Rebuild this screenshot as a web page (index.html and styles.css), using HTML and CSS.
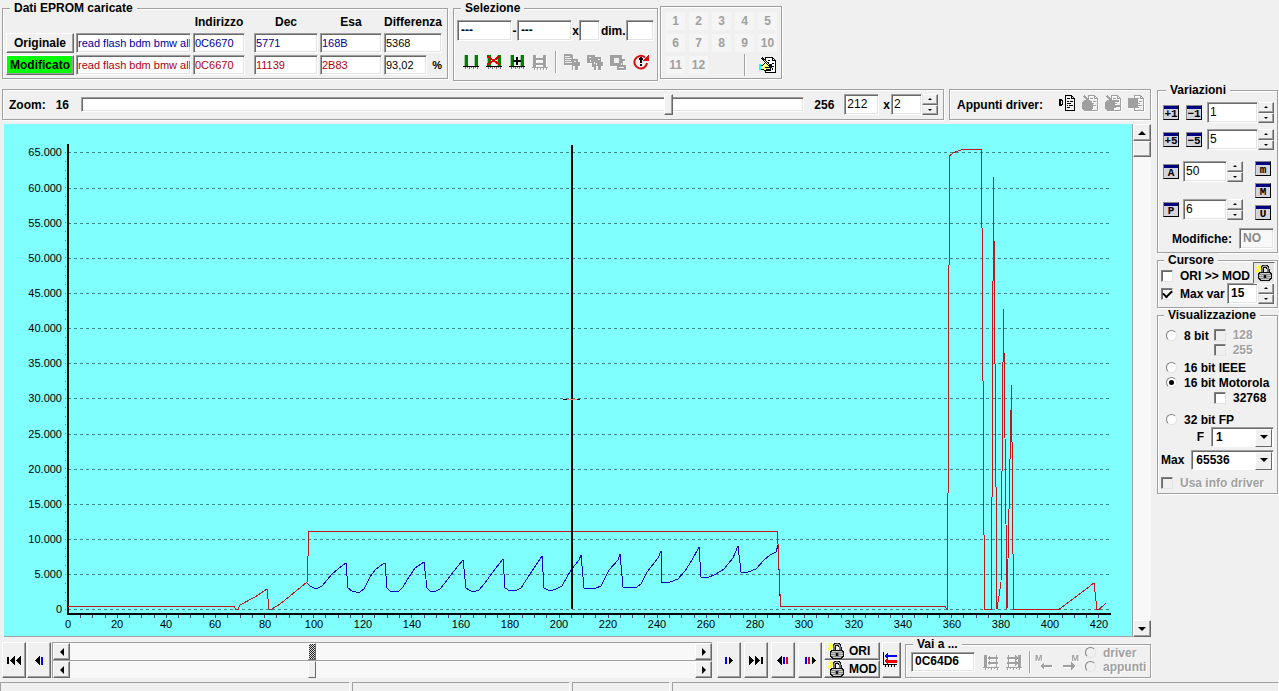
FILE: index.html
```html
<!DOCTYPE html>
<html lang="it">
<head>
<meta charset="utf-8">
<title>Dati EPROM</title>
<link rel="stylesheet" href="styles.css">
</head>
<body>
<svg class="defs" aria-hidden="true">
  <symbol id="i-bars" viewBox="0 0 16 16"><path fill="#008000" d="M1 1h4v11h-4zM11 1h4v11h-4z"/><path class="paper" d="M1 1h1v11h-1zM11 1h1v11h-1z"/><path d="M0 12h16v1H0z"/><path fill="#777" d="M2 13h1v2h-1zM4 13h1v1h-1zM6 13h1v2h-1zM8 13h1v1h-1zM10 13h1v2h-1zM12 13h1v1h-1zM14 13h1v2h-1z"/></symbol>
  <symbol id="i-ladder" viewBox="0 0 16 16"><path d="M1 1h3v13h-3zM11 1h3v13h-3zM4 4h7v2H4zM4 9h7v2H4zM0 13h16v1H0zM2 14h1v2h-1zM5 14h1v2h-1zM8 14h1v2h-1zM11 14h1v2h-1zM14 14h1v2h-1z"/></symbol>
  <symbol id="i-page" viewBox="0 0 16 16"><path d="M6 0h7v1H6zM6 0h1v16H6zM6 15h10v1H6zM15 3h1v13h-1zM12 0h1v4h-1zM12 3h4v1h-4zM13 1h1v1h-1zM14 2h1v1h-1zM8 3h3v1H8zM8 6h2v1H8zM11 6h3v1h-3zM8 8h4v1H8zM8 10h1v1H8zM10 10h4v1h-4zM8 12h3v1H8z"/></symbol>
  <symbol id="i-copy" viewBox="0 0 16 16"><path d="M0 0h7l2 2v3h5v3h2v4h-2v4h-3v-4H9v4H8v-5H0z"/><path class="hole" d="M1 2h5v1H1zM1 4h7v1H1zM1 6h6v1H1zM1 8h7v1H1zM10 7h2v1h-2z"/></symbol>
  <symbol id="i-copy2" viewBox="0 0 16 16"><path d="M0 1h8v2h6v5h2v4h-2v4h-3v-4h-2v4H7v-3H5v-4H0z"/><path class="hole" d="M2 3h2v1H2zM3 6h1v2H3zM11 5h2v1h-2zM7 8h1v2H7zM9 9h1v2H9z"/></symbol>
  <symbol id="i-copy3" viewBox="0 0 16 16"><path d="M0 1h12v4h3v2h-2v4h3v5H7v-4H0z"/><path class="hole" d="M4 4h5v5H4zM9 13h5v1H9zM11 9h1v2h-1z"/></symbol>
  <symbol id="i-lock" viewBox="0 0 18 18"><path fill="#ff4" d="M0 3h3L2 0l4 2v4l-2 1v2L2 8H0l2-3z"/><path fill="none" stroke="#111" stroke-width="3" d="M7 9V5q0-3 3-3t3 3v4"/><path class="smooth" fill="none" stroke="#ccc" stroke-width="1" d="M7 9V5q0-3 3-3t3 3v4"/><path fill="#111" d="M4 8h12v1h1v6h-1v1h-1v1H5v-1H4v-1H3V9h1z"/><path fill="#ccc" d="M5 9h10v1H5zM4 11h4v1H4zM12 11h4v1h-4zM4 13h4v1H4zM12 13h4v1h-4zM6 15h8v1H6z"/><path fill="#888" d="M4 10h12v1H4zM4 12h4v1H4zM12 12h4v1h-4zM5 14h10v1H5zM8 11h1v3H8zM11 11h1v3h-1z"/></symbol>
  <symbol id="i-hand" viewBox="0 0 18 18"><path fill="#fff" stroke="#000" d="M6.500 1.500h7l3 3v12h-10z"/><path d="M13 1h1v3h3v1h-4zM9 4h2v1H9zM13 7h2v1h-2zM11 10h4v1h-4zM13 12h1v2h-1zM9 14h3v1H9z"/><path fill="#ffff80" stroke="#000" d="M1.500 9.500h2l3-3h3v2h3v3h-1v3h-6l-1-1h-3z"/><path fill="#0ff" d="M0 8h2v6H0z"/><path fill="none" stroke="#000" stroke-width="2" d="M3 2l9 9"/><path fill="none" stroke="#ff8" d="M5 4l5 5"/><path d="M6 11h5v1H6zM7 13h4v1H7z"/></symbol>
  <symbol id="i-comb-left" viewBox="0 0 16 16"><path d="M1 1h3v12h-3zM13 1h1v12h-1zM4 4l3-3v2h8v2H7v2zM4 9l3-3v2h8v2H7v2zM0 13h16v1H0zM2 14h1v2h-1zM5 14h1v1h-1zM8 14h1v2h-1zM11 14h1v1h-1zM14 14h1v2h-1z"/></symbol>
  <symbol id="i-arrow" viewBox="0 0 12 8"><path d="M0 4l4-4v3h8v2H4v3z"/></symbol>
  <symbol id="t-left" viewBox="0 0 5 9"><path d="M5 0v9L0 4.500z"/></symbol>
  <symbol id="t-right" viewBox="0 0 5 9"><path d="M0 0v9l5-4.500z"/></symbol>
</svg>

<div class="app">
  <header class="top">
    <fieldset class="group eprom">
      <legend>Dati EPROM caricate</legend>
      <div class="eprom-grid">
        <span class="head addr">Indirizzo</span><span class="head">Dec</span><span class="head">Esa</span><span class="head">Differenza</span>
        <button class="btn file" type="button">Originale</button>
        <input class="field ori" aria-label="File originale" value="read flash bdm bmw all">
        <input class="field ori addr" aria-label="Indirizzo originale" value="0C6670">
        <input class="field ori" aria-label="Dec originale" value="5771">
        <input class="field ori" aria-label="Esa originale" value="168B">
        <input class="field" aria-label="Differenza" value="5368">
        <button class="btn file active" type="button">Modificato</button>
        <input class="field mod" aria-label="File modificato" value="read flash bdm bmw all">
        <input class="field mod addr" aria-label="Indirizzo modificato" value="0C6670">
        <input class="field mod" aria-label="Dec modificato" value="11139">
        <input class="field mod" aria-label="Esa modificato" value="2B83">
        <span class="percent"><input class="field" aria-label="Differenza percentuale" value="93,02"><b>%</b></span>
      </div>
    </fieldset>

    <fieldset class="group selection">
      <legend>Selezione</legend>
      <div class="sel-fields">
        <input class="field bold w54" aria-label="Inizio" value="---"><span>-</span><input class="field bold w54" aria-label="Fine" value="---"><span>x</span><input class="field w21" aria-label="Colonne"><label for="dim">dim.</label><input class="field w28" id="dim">
      </div>
      <div class="tools">
        <button class="tool" type="button" aria-label="Seleziona"><svg><use href="#i-bars"/></svg></button>
        <button class="tool" type="button" aria-label="Annulla selezione"><svg viewBox="0 0 16 16"><use href="#i-bars"/><path stroke="#d00" stroke-width="2" d="M1 2l13 9M14 2L1 11"/></svg></button>
        <button class="tool" type="button" aria-label="Aggiungi"><svg viewBox="0 0 16 16"><use href="#i-bars"/><path d="M4 6h8v2H4zM7 3h2v8H7z"/></svg></button>
        <button class="tool off" type="button" disabled aria-label="Unisci"><svg><use href="#i-ladder"/></svg></button>
        <i class="sep"></i>
        <button class="tool off" type="button" disabled aria-label="Copia"><svg><use href="#i-copy"/></svg></button>
        <button class="tool off" type="button" disabled aria-label="Copia blocco"><svg><use href="#i-copy2"/></svg></button>
        <button class="tool off" type="button" disabled aria-label="Incolla"><svg><use href="#i-copy3"/></svg></button>
        <button class="tool" type="button" aria-label="Ripristina"><svg viewBox="0 0 16 16"><path class="smooth" fill="none" stroke="#d81010" stroke-width="2" d="M12 3.500A6.300 6.300 0 1 0 14 9"/><path fill="#d81010" d="M16 0v7H9z"/><path d="M7 3h2v6H7zM6 4h4v2H6zM7 10h2v2H7z"/></svg></button>
      </div>
    </fieldset>

    <section class="group pages" aria-label="Pagine">
      <button type="button" disabled>1</button><button type="button" disabled>2</button><button type="button" disabled>3</button><button type="button" disabled>4</button><button type="button" disabled>5</button>
      <button type="button" disabled>6</button><button type="button" disabled>7</button><button type="button" disabled>8</button><button type="button" disabled>9</button><button type="button" disabled>10</button>
      <button type="button" disabled>11</button><button type="button" disabled>12</button><span></span><i class="sep"></i>
      <button class="tool note" type="button" aria-label="Annota"><svg><use href="#i-hand"/></svg></button>
    </section>
  </header>

  <main class="main">
    <div class="work">
      <div class="zoombar">
        <section class="group zoom">
          <label for="zoom">Zoom:</label><span class="min">16</span>
          <input class="slider" id="zoom" type="range" min="16" max="256" value="212">
          <span>256</span>
          <input class="field big w35" aria-label="Zoom attuale" value="212">
          <label for="mult">x</label>
          <span class="spin"><input class="field big w30" id="mult" value="2"><span class="ud"><button type="button" aria-label="Su"></button><button type="button" aria-label="Giù"></button></span></span>
        </section>
        <section class="group notes">
          <span class="notes-label">Appunti driver:</span>
          <button class="tool" type="button" aria-label="Documento"><svg viewBox="0 0 16 16"><use href="#i-page"/><path d="M0 4h3v1h1v5H3v1H0zM2 6v3h1V6z" fill-rule="evenodd"/></svg></button>
          <button class="tool off" type="button" disabled aria-label="Scrivi appunto"><svg viewBox="0 0 16 16"><use href="#i-page"/><path d="M0 7l3-2 4 1 4 4v3l-3 3H3l-3-2zM2 0l9 8-1 1L1 2z"/></svg></button>
          <button class="tool off" type="button" disabled aria-label="Modifica appunto"><svg viewBox="0 0 16 16"><use href="#i-page"/><path d="M0 7l3-2h11v2h-4v3h5v2h-5l-2 4H3l-3-2zM2 0l9 8-1 1L1 2z"/></svg></button>
          <button class="tool off" type="button" disabled aria-label="Chiudi appunto"><svg viewBox="0 0 16 16"><use href="#i-page"/><path d="M0 3h10v10H0z"/></svg></button>
        </section>
      </div>

      <div class="plot">
        <svg class="chart" viewBox="4 124 1129 513" role="img" aria-label="Grafico dei valori">
          <g class="lines">
            <path class="grid" d="M68 152.500H1110M68 188.500H1110M68 223.500H1110M68 258.500H1110M68 293.500H1110M68 328.500H1110M68 363.500H1110M68 398.500H1110M68 434.500H1110M68 469.500H1110M68 504.500H1110M68 539.500H1110M68 574.500H1110M68 609.500H1110"/>
            <path class="xticks" d="M80 616.500H1110"/><path class="yticks" d="M65.500 152V612"/>
            <path class="axis" d="M68 144V614H1111"/>
            <path class="blue" d="M307 583L310 586L314 588H318L322 586L327 580L332 574L338 569L346 563L348 588L352 591L356 592H360L364 589L370 577L375 570L384 563H385L387 588L390 591L394 592L399 591L403 587L409 577L415 568L424 562L427 588L430 591L434 592L440 589L448 579L454 571L463 560L466 588L469 590L473 592L479 590L485 583L492 573L503 559L505 588L510 591L517 590L521 588L532 571L542 556L544 588L550 591L556 589L562 586L567 577L571 570L579 560L581 555L584 588L591 589L596 588L601 586L609 570L618 560L620 554L623 587L629 588L637 587L641 584L647 572L658 558L661 551L662 582H670L678 579L685 571L692 560L699 547L701 577L707 578L716 574L724 569L733 558L738 546L741 572H748L756 569L764 560L770 555L776 552L778 545L779 570L780 596"/>
            <path class="red" d="M68 606.500H234L236 609.500H238L240 605L255 597L267 589L269 609L272 609L280 604L290 596L307 582L309 531.500H777.500L780.500 606.500H945L947.500 609.500L949.500 156L953 153L962 149.500H981.500L984.500 609.500H991.500L993.500 177L997 609L1001 583L1003.500 309L1007 609L1011.500 385L1013.500 609.500H1059L1094 583L1097 609.500H1099L1106 603"/>
            <path class="cursor" d="M572 145V609"/><path class="cross" d="M563 399.500H580"/><path class="crossred" d="M567 399.500H577"/>
          </g>
          <g class="ylab"><text x="62" y="156">65.000</text><text x="62" y="192">60.000</text><text x="62" y="227">55.000</text><text x="62" y="262">50.000</text><text x="62" y="297">45.000</text><text x="62" y="332">40.000</text><text x="62" y="367">35.000</text><text x="62" y="402">30.000</text><text x="62" y="438">25.000</text><text x="62" y="473">20.000</text><text x="62" y="508">15.000</text><text x="62" y="543">10.000</text><text x="62" y="578">5.000</text><text x="62" y="613">0</text></g>
          <g class="xlab"><text x="68" y="628">0</text><text x="117" y="628">20</text><text x="166" y="628">40</text><text x="215" y="628">60</text><text x="265" y="628">80</text><text x="314" y="628">100</text><text x="363" y="628">120</text><text x="412" y="628">140</text><text x="461" y="628">160</text><text x="510" y="628">180</text><text x="559" y="628">200</text><text x="608" y="628">220</text><text x="657" y="628">240</text><text x="706" y="628">260</text><text x="755" y="628">280</text><text x="804" y="628">300</text><text x="854" y="628">320</text><text x="903" y="628">340</text><text x="952" y="628">360</text><text x="1001" y="628">380</text><text x="1050" y="628">400</text><text x="1099" y="628">420</text></g>
        </svg>
        <div class="vbar">
          <button class="btn arrow up" type="button" aria-label="Scorri su"></button>
          <span class="btn vthumb"></span>
          <button class="btn arrow down" type="button" aria-label="Scorri giù"></button>
        </div>
      </div>

      <div class="bottom">
        <button class="btn nav" type="button" aria-label="Inizio"><svg viewBox="0 0 14 9"><path d="M0 1h2v7H0z"/><use href="#t-left" x="3" width="5" height="9"/><use href="#t-left" x="9" width="5" height="9"/></svg></button>
        <button class="btn nav" type="button" aria-label="Indietro"><svg viewBox="0 0 14 9"><use href="#t-left" x="3" width="5" height="9"/><path fill="#00f" d="M9 1h2v8H9z"/></svg></button>
        <div class="hbars">
          <div class="hbar"><button class="btn arrow left" type="button" aria-label="Sinistra"></button><input class="scroll dark" type="range" max="1000" value="386" aria-label="Posizione originale"><button class="btn arrow right" type="button" aria-label="Destra"></button></div>
          <div class="hbar"><button class="btn arrow left" type="button" aria-label="Sinistra"></button><input class="scroll" type="range" max="1000" value="386" aria-label="Posizione modificato"><button class="btn arrow right" type="button" aria-label="Destra"></button></div>
        </div>
        <div class="navs">
          <button class="btn nav" type="button" aria-label="Avanti"><svg viewBox="0 0 14 9"><path fill="#00f" d="M3 1h2v7H3z"/><use href="#t-right" x="7" width="4" height="9"/></svg></button>
          <button class="btn nav" type="button" aria-label="Fine"><svg viewBox="0 0 14 9"><use href="#t-right" x="0" width="5" height="9"/><use href="#t-right" x="6" width="5" height="9"/><path d="M12 1h2v7h-2z"/></svg></button>
          <button class="btn nav" type="button" aria-label="Differenza precedente"><svg viewBox="0 0 14 9"><use href="#t-left" x="1" width="5" height="9"/><path fill="#00f" d="M7 1h2v7H7z"/><path fill="#e00" d="M10 1h2v7h-2z"/></svg></button>
          <button class="btn nav" type="button" aria-label="Differenza successiva"><svg viewBox="0 0 14 9"><path fill="#00f" d="M2 1h2v7H2z"/><path fill="#e00" d="M5 1h2v7H5z"/><use href="#t-right" x="9" width="4" height="9"/></svg></button>
        </div>
        <div class="locks">
          <button class="btn lock" type="button"><svg><use href="#i-lock"/></svg>ORI</button>
          <button class="btn lock" type="button"><svg><use href="#i-lock"/></svg>MOD</button>
        </div>
        <button class="btn align" type="button" aria-label="Allinea"><svg viewBox="0 0 16 16"><path d="M0 0h1v13H0zM0 12h14v1H0zM2 13h1v2H2zM5 13h1v2H5zM8 13h1v2H8zM11 13h1v2h-1z"/><path fill="#00f" d="M1 4l4-4v3h9v2H5v3z"/><path fill="#e00" d="M1 9l4-4v3h9v3H5v2z"/></svg></button>
        <fieldset class="group goto">
          <legend>Vai a ...</legend>
          <div class="goto-row">
            <input class="field bold w64" aria-label="Vai a indirizzo" value="0C64D6">
            <button class="tool off" type="button" disabled aria-label="Blocco precedente"><svg><use href="#i-comb-left"/></svg></button>
            <button class="tool off" type="button" disabled aria-label="Blocco successivo"><svg class="flip"><use href="#i-comb-left"/></svg></button>
            <i class="sep"></i>
            <button class="tool off mark" type="button" disabled aria-label="Marca precedente"><span>M</span><svg><use href="#i-arrow"/></svg></button>
            <button class="tool off mark next" type="button" disabled aria-label="Marca successiva"><span>M</span><svg class="flip"><use href="#i-arrow"/></svg></button>
            <div class="goto-opts">
              <label class="off-text"><input type="radio" name="goto" disabled>driver</label>
              <label class="off-text"><input type="radio" name="goto" disabled>appunti</label>
            </div>
          </div>
        </fieldset>
      </div>
    </div>

    <aside class="side">
      <fieldset class="group vars">
        <legend>Variazioni</legend>
        <div class="vrow"><button class="win" type="button">+1</button><button class="win" type="button">−1</button><span class="spin"><input class="field big" aria-label="Passo 1" value="1"><span class="ud"><button type="button" aria-label="Su"></button><button type="button" aria-label="Giù"></button></span></span></div>
        <div class="vrow"><button class="win" type="button">+5</button><button class="win" type="button">−5</button><span class="spin"><input class="field big" aria-label="Passo 5" value="5"><span class="ud"><button type="button" aria-label="Su"></button><button type="button" aria-label="Giù"></button></span></span></div>
        <div class="vblock">
          <div class="vleft">
            <div class="vrow"><button class="win" type="button">A</button><span class="spin"><input class="field big" aria-label="Valore assoluto" value="50"><span class="ud"><button type="button" aria-label="Su"></button><button type="button" aria-label="Giù"></button></span></span></div>
            <div class="vrow"><button class="win" type="button">P</button><span class="spin"><input class="field big" aria-label="Percentuale" value="6"><span class="ud"><button type="button" aria-label="Su"></button><button type="button" aria-label="Giù"></button></span></span></div>
          </div>
          <div class="vright"><button class="win" type="button">m</button><button class="win" type="button">M</button><button class="win" type="button">U</button></div>
        </div>
        <div class="changes"><label for="mods">Modifiche:</label><input class="field bold w34" id="mods" value="NO" disabled></div>
      </fieldset>

      <fieldset class="group cur">
        <legend>Cursore</legend>
        <div class="crow"><label><input type="checkbox">ORI &gt;&gt; MOD</label></div>
        <div class="crow"><label><input type="checkbox" checked>Max var</label><span class="spin"><input class="field big bold w30" aria-label="Max var" value="15"><span class="ud"><button type="button" aria-label="Su"></button><button type="button" aria-label="Giù"></button></span></span></div>
        <button class="curlock" type="button" aria-label="Blocca cursore"><svg><use href="#i-lock"/></svg></button>
      </fieldset>

      <fieldset class="group view">
        <legend>Visualizzazione</legend>
        <div class="bit8"><label class="opt"><input type="radio" name="bits">8 bit</label><div class="subs"><label class="off-text"><input type="checkbox" disabled>128</label><label class="off-text"><input type="checkbox" disabled>255</label></div></div>
        <label class="opt ieee"><input type="radio" name="bits">16 bit IEEE</label>
        <label class="opt"><input type="radio" name="bits" checked>16 bit Motorola</label>
        <label class="sub"><input type="checkbox">32768</label>
        <label class="opt fp"><input type="radio" name="bits">32 bit FP</label>
        <div class="combo-row"><label for="fsel">F</label><span class="combo f"><select id="fsel"><option>1</option></select></span></div>
        <div class="combo-row max"><label for="msel">Max</label><span class="combo"><select id="msel"><option>65536</option></select></span></div>
        <label class="info off-text"><input type="checkbox" disabled>Usa info driver</label>
      </fieldset>
    </aside>
  </main>

  <footer class="status"><span></span><span></span><span></span><span></span></footer>
</div>
</body>
</html>
```
FILE: styles.css
```css
* { box-sizing: border-box; }
body {
  margin: 0;
  background: #f0f0f0;
  color: #000;
  font: bold 12px/14px "Liberation Sans", Arial, sans-serif;
}
button, input, select { font: inherit; color: inherit; margin: 0; }
button { padding: 0; }
.defs { position: absolute; width: 0; height: 0; }
.app { min-height: 100vh; display: flex; flex-direction: column; overflow: hidden; }
.tool svg, .btn svg, .curlock svg { shape-rendering: crispEdges; }
.smooth { shape-rendering: auto; }
.hole { fill: #f0f0f0; }
.paper { fill: #9c9; }

/* group boxes */
.group {
  margin: 0;
  min-width: 0;
  padding: 0 3px 3px;
  border: 1px solid #a0a0a0;
  box-shadow: 1px 1px #fff, inset 1px 1px #fff;
}
legend { padding: 0 4px; margin-left: 4px; height: 14px; background: #f0f0f0; }

/* fields */
.field {
  width: 100%;
  min-width: 0;
  height: 21px;
  padding: 0 1px 2px;
  border: 1px solid;
  border-color: #a0a0a0 #fff #fff #a0a0a0;
  border-radius: 0;
  box-shadow: inset 1px 1px #696969, inset -1px -1px #e3e3e3;
  background: #fff;
  font-size: 11px;
  font-weight: normal;
  outline: 0;
}
.field:disabled { color: #888; background: #f8f8f8; }
.big { font-size: 12px; padding-left: 2px; }
.bold { font-weight: bold; font-size: 12px; padding-left: 3px; }
.ori { color: #00009c; }
.mod { color: #b00010; }
.w54 { width: 55px; } .w21 { width: 21px; } .w28 { width: 28px; } .w35 { width: 35px; }
.w30 { width: 31px; } .w34 { width: 35px; } .w64 { width: 64px; }

.btn {
  background: #f0f0f0;
  border: 1px solid;
  border-color: #fff #696969 #696969 #fff;
  box-shadow: inset -1px -1px #a0a0a0;
}
.tool { width: 23px; height: 18px; border: 0; background: none; display: flex; align-items: center; justify-content: center; flex: none; }
.tool svg { width: 16px; height: 16px; display: block; }
.off { color: #a0a0a0; fill: #a0a0a0; filter: drop-shadow(1px 1px 0 #fff); }
.off-text { color: #a0a0a0; text-shadow: 1px 1px #fff; }
.sep { width: 1px; height: 22px; background: #a0a0a0; box-shadow: 1px 0 #fff; }
.flip { transform: scaleX(-1); }

/* top row */
.top { display: flex; align-items: flex-start; padding: 1px 2px 0; height: 82px; }
.eprom { width: 446px; }
.eprom-grid { display: grid; grid-template-columns: 68px 115px 59px 64px 62px 58px; gap: 2px; grid-template-rows: 16px 20px 20px; }
.head { text-align: center; white-space: nowrap; }
.head.addr { grid-column: 3; }
.addr { width: 52px; }
.file { height: 20px; }
.file.active { background: #0f0; }
.eprom .field { height: 20px; padding: 0 0 1px 1px; }
.percent { display: flex; align-items: center; gap: 5px; font-size: 11px; }
.percent .field { width: 44px; }

.selection { margin-left: 5px; width: 205px; height: 80px; }
.sel-fields { display: flex; align-items: center; justify-content: space-between; padding-top: 5px; }
.tools { display: flex; align-items: center; padding: 10px 0 0 2px; }
.tools .sep { margin: 0 4px; }

.pages { display: grid; grid-template-columns: repeat(5, 23px); grid-template-rows: repeat(3, 22px); width: 122px; margin: 5px 0 0 2px; padding: 3px 2px 2px 3px; justify-items: center; align-items: center; }
.pages button:not(.tool) { width: 19px; height: 18px; border: 0; background: #f5f5f5; color: #a0a0a0; }
.note svg { width: 18px; height: 18px; }

/* main */
.main { display: flex; align-items: flex-start; gap: 5px; padding: 1px 1px 0 0; flex: 1; }
.work { flex: 1; min-width: 0; padding: 6px 1px 0 0; }
.zoombar { display: flex; gap: 5px; padding-left: 2px; height: 31px; }
.zoom { flex: 1; display: flex; align-items: center; padding: 0 5px 0 6px; gap: 10px; }
.zoom label[for="mult"] { margin: 0 -9px 0 -6px; }
.zoom .min { margin-right: 2px; }
.spin { display: flex; min-width: 0; }
.ud { display: flex; flex-direction: column; width: 16px; flex: none; height: 21px; }
.ud button { flex: 1; display: flex; align-items: center; justify-content: center; background: #f0f0f0; border: 1px solid; border-color: #fff #696969 #696969 #e3e3e3; box-shadow: inset -1px -1px #a0a0a0; }
.ud button::before { content: ""; border: 2px solid transparent; border-top: 0; border-bottom: 2px solid #000; }
.ud button:last-child::before { transform: rotate(180deg); }
.notes { width: 202px; display: flex; align-items: center; padding: 0 3px 3px 7px; }
.notes-label { flex: 1; padding-top: 3px; }

input[type="range"] { appearance: none; min-width: 0; flex: 1; }
.slider { height: 15px; background: #fff; border: 1px solid; border-color: #a0a0a0 #fff #fff #a0a0a0; box-shadow: inset 1px 1px #696969, inset -1px -1px #e3e3e3; }
.slider::-webkit-slider-thumb { appearance: none; width: 9px; height: 21px; background: #f0f0f0; border: 1px solid; border-color: #fff #696969 #696969 #fff; box-shadow: inset -1px -1px #a0a0a0; }

/* chart */
.plot { display: flex; margin-top: 4px; padding-left: 4px; }
.chart { flex: 1; min-width: 0; display: block; background: #80ffff; box-shadow: inset -1px -1px #a0a0a0; font-size: 11px; font-weight: normal; }
.lines { shape-rendering: crispEdges; fill: none; stroke-width: 1px; }
.grid { stroke: #408888; stroke-dasharray: 3 3; }
.axis { stroke: #000; stroke-width: 2px; }
.xticks { stroke: #448; stroke-width: 3px; stroke-dasharray: 1 11.27; }
.yticks { stroke: #688; stroke-dasharray: 1 7.79; }
.red { stroke: #c01818; }
.blue { stroke: #0000c0; }
.cursor { stroke: #000; stroke-width: 2px; }
.cross { stroke: #000; }
.crossred { stroke: #f88; }
.ylab { text-anchor: end; }
.xlab { text-anchor: middle; }

.vbar { width: 18px; flex: none; display: flex; flex-direction: column; background: #f8f8f8; }
.arrow { width: 17px; height: 17px; flex: none; display: flex; align-items: center; justify-content: center; }
.vbar .btn { width: 18px; }
.arrow::before { content: ""; border: 4px solid transparent; }
.up::before { border-top: 0; border-bottom-color: #000; }
.down::before { border-bottom: 0; border-top-color: #000; }
.left::before { border-left: 0; border-right-color: #000; }
.right::before { border-right: 0; border-left-color: #000; }
.vthumb { height: 16px; }
.down { margin-top: auto; }

/* bottom */
.bottom { display: flex; padding-left: 2px; align-items: flex-start; }
.bottom > :not(.goto) { margin-top: 5px; }
.nav { width: 24px; height: 36px; display: flex; align-items: center; justify-content: center; flex: none; margin-right: 1px; }
.nav svg { width: 14px; height: 9px; }
.hbars { flex: 1; min-width: 0; display: flex; flex-direction: column; }
.hbar { display: flex; height: 18px; border-top: 1px solid #a0a0a0; border-left: 1px solid #a0a0a0; }
.scroll { background: #f8f8f8; height: 17px; }
.scroll::-webkit-slider-thumb { appearance: none; width: 8px; height: 17px; background: #f0f0f0; border: 1px solid; border-color: #fff #696969 #696969 #fff; }
.scroll.dark::-webkit-slider-thumb { background: repeating-conic-gradient(#222 0 25%, #ddd 0 50%) 0 0 / 2px 2px; }
.navs { display: flex; gap: 2px; margin: 0 1px 0 5px; }
.locks { width: 56px; }
.lock { width: 56px; height: 18px; display: flex; align-items: center; gap: 4px; padding-left: 2px; }
.lock svg { width: 18px; height: 18px; flex: none; }
.align { width: 19px; height: 36px; margin-left: 2px; }
.align svg { width: 16px; height: 16px; display: block; }
.goto { width: 246px; margin-left: 4px; height: 41px; padding: 0 3px; }
.goto-row { display: flex; align-items: center; height: 21px; padding-left: 2px; }
.goto-row .field { height: 20px; margin-right: 4px; }
.goto-row .sep { margin: 0 3px 0 4px; height: 22px; }
.goto-opts { padding-left: 6px; margin-bottom: 4px; }
.goto-opts label { display: flex; align-items: center; gap: 7px; height: 14px; white-space: nowrap; }
.mark { flex-direction: column; align-items: flex-start; padding-left: 2px; }
.mark span { font-size: 9px; line-height: 8px; }
.mark svg { width: 12px; height: 8px; align-self: center; }
.mark.next { align-items: flex-end; }

/* checks and radios */
input[type="checkbox"], input[type="radio"] {
  appearance: none; flex: none; width: 12px; height: 12px; background: #fff;
  border: 1px solid; border-color: #808080 #e3e3e3 #e3e3e3 #808080;
  box-shadow: inset 1px 1px #696969; display: grid; place-items: center;
}
input[type="radio"] { border-radius: 50%; width: 11px; height: 11px; box-shadow: none; }
input[type="checkbox"]:disabled, input[type="radio"]:disabled { background: #f0f0f0; }
input[type="checkbox"]:checked::before { content: ""; width: 7px; height: 4px; margin-bottom: 2px; border: solid #000; border-width: 0 0 2px 2px; transform: rotate(-45deg); }
input[type="radio"]:checked::before { content: ""; width: 5px; height: 5px; border-radius: 50%; background: #000; }

/* sidebar */
.side { width: 121px; flex: none; display: flex; flex-direction: column; }
.side legend { margin-left: 3px; }
.side .vars { padding: 5px 3px 2px 5px; display: flex; flex-direction: column; height: 170px; }
.vrow { display: flex; align-items: center; gap: 7px; height: 21px; margin-bottom: 6px; }
.vrow .spin { flex: 1; margin-left: -2px; }
.win {
  width: 16px; height: 15px; flex: none; border: 1px solid; border-color: #888 #000 #000 #888;
  background: linear-gradient(#000080 3px, #d4d4dc 3px);
  font: bold 11px/10px "Liberation Mono", monospace; white-space: nowrap;
  padding-top: 3px; display: flex; align-items: center; justify-content: center;
}
.vblock { display: flex; justify-content: space-between; margin-top: 5px; padding-right: 3px; }
.vleft { width: 80px; }
.vleft .vrow { margin-bottom: 17px; gap: 6px; }
.vright { display: flex; flex-direction: column; gap: 7px; }
.changes { display: flex; align-items: center; justify-content: flex-end; gap: 7px; margin-top: -9px; }
.cur { position: relative; padding: 2px 3px 2px; height: 55px; }
.crow { display: flex; align-items: center; justify-content: space-between; height: 14px; }
.crow + .crow { height: 21px; }
.crow label { display: flex; align-items: center; gap: 7px; white-space: nowrap; }
.curlock { position: absolute; right: 2px; top: -5px; width: 22px; height: 22px; display: grid; place-items: center; border: 1px solid; border-color: #696969 #fff #fff #696969; background: #e4e4e4; }
.curlock svg { width: 18px; height: 18px; }
.view { padding: 5px 3px 2px; display: flex; flex-direction: column; height: 186px; }
.bit8 { display: flex; align-items: flex-start; gap: 5px; }
.bit8 > .opt { padding-top: 2px; }
.subs label, .sub { display: flex; align-items: center; gap: 7px; height: 15px; }
.opt { display: flex; align-items: center; gap: 7px; height: 15px; padding-left: 5px; white-space: nowrap; }
.ieee { margin-top: 3px; }
.sub { padding-left: 53px; }
.fp { margin-top: 7px; }
.combo-row { display: flex; align-items: center; justify-content: flex-end; gap: 7px; }
.combo { position: relative; width: 83px; height: 20px; display: block; }
.combo.f { width: 63px; }
.combo select { appearance: none; width: 100%; height: 20px; padding: 0 18px 0 4px; border: 1px solid; border-color: #a0a0a0 #fff #fff #a0a0a0; border-radius: 0; box-shadow: inset 1px 1px #696969; background: #fff; }
.combo::before { content: ""; position: absolute; right: 2px; top: 2px; width: 15px; height: 16px; background: #f0f0f0; border: 1px solid; border-color: #fff #696969 #696969 #fff; pointer-events: none; }
.combo::after { content: ""; position: absolute; right: 6px; top: 8px; border: 4px solid transparent; border-bottom: 0; border-top-color: #000; pointer-events: none; }
.max { margin-top: 3px; }
.info { display: flex; align-items: center; gap: 7px; margin-top: 6px; white-space: nowrap; }

/* status bar */
.status { display: grid; grid-template-columns: 350px 218px 98px 1fr; gap: 2px; height: 9px; margin-top: 3px; }
.status span { border: 1px solid; border-color: #a0a0a0 #fff #fff #a0a0a0; border-bottom: 0; }
```
